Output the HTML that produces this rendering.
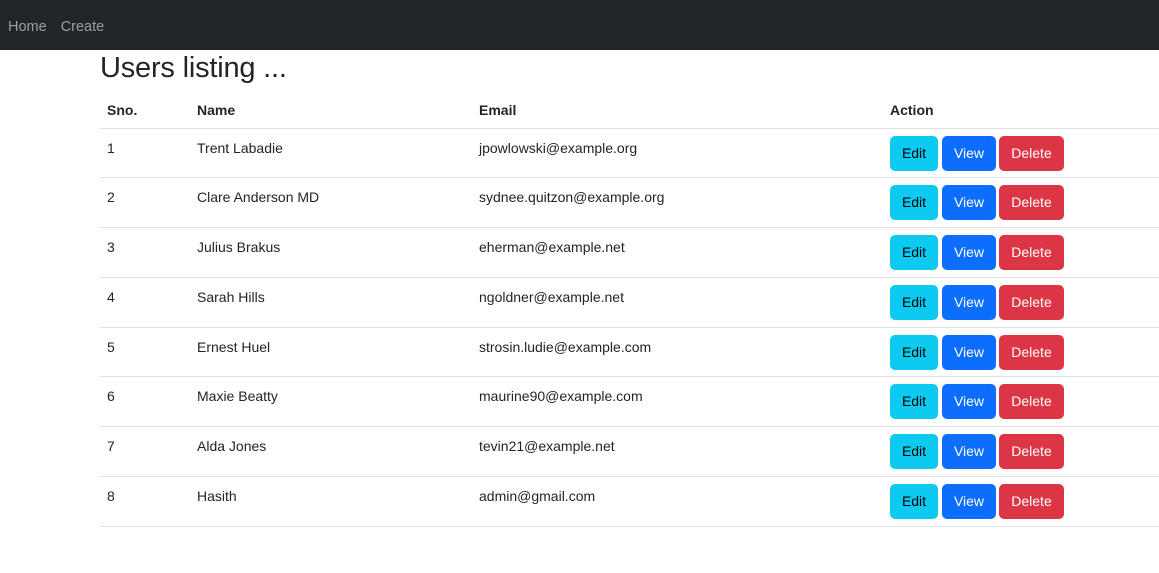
<!DOCTYPE html>
<html><head><style>
*{box-sizing:border-box;margin:0;padding:0}
body{width:1159px;height:573px;background:#fff;font-family:"Liberation Sans",sans-serif;color:#212529;overflow:hidden}
.nav{height:50px;background:#212529;display:flex;align-items:center;padding-left:8px;padding-top:3px;font-size:14.5px}
.nav span{color:rgba(255,255,255,.55);margin-right:14px}
h1{position:absolute;left:100px;top:52px;font-size:29px;font-weight:500;letter-spacing:-.2px}
table{position:absolute;left:100px;top:92px;width:1059px;border-collapse:collapse;font-size:14px}
th{text-align:left;font-weight:bold;height:36px;padding:0 7px;border-bottom:1px solid #dee2e6;vertical-align:middle}
td{height:49.75px;padding:0 7px;border-bottom:1px solid #dee2e6;vertical-align:top;padding-top:11px}
td.a{padding-top:7px;padding-left:0}
.b{display:inline-block;height:35px;line-height:35px;border-radius:5px;font-size:14px;text-align:center;color:#fff;margin-right:1px}
.e{background:#0dcaf0;color:#000;width:48px;margin-right:4px}
.v{background:#0d6efd;width:54px;margin-right:3px}
.d{background:#dc3545;width:65px}
</style></head><body>
<div class="nav"><span>Home</span><span>Create</span></div>
<h1>Users listing ...</h1>
<table>
<tr><th style="width:90px">Sno.</th><th style="width:282px">Name</th><th style="width:418px;padding-left:7px">Email</th><th style="padding-left:0">Action</th></tr>
<tr><td>1</td><td>Trent Labadie</td><td>jpowlowski@example.org</td><td class="a"><span class="b e">Edit</span><span class="b v">View</span><span class="b d">Delete</span></td></tr>
<tr><td>2</td><td>Clare Anderson MD</td><td>sydnee.quitzon@example.org</td><td class="a"><span class="b e">Edit</span><span class="b v">View</span><span class="b d">Delete</span></td></tr>
<tr><td>3</td><td>Julius Brakus</td><td>eherman@example.net</td><td class="a"><span class="b e">Edit</span><span class="b v">View</span><span class="b d">Delete</span></td></tr>
<tr><td>4</td><td>Sarah Hills</td><td>ngoldner@example.net</td><td class="a"><span class="b e">Edit</span><span class="b v">View</span><span class="b d">Delete</span></td></tr>
<tr><td>5</td><td>Ernest Huel</td><td>strosin.ludie@example.com</td><td class="a"><span class="b e">Edit</span><span class="b v">View</span><span class="b d">Delete</span></td></tr>
<tr><td>6</td><td>Maxie Beatty</td><td>maurine90@example.com</td><td class="a"><span class="b e">Edit</span><span class="b v">View</span><span class="b d">Delete</span></td></tr>
<tr><td>7</td><td>Alda Jones</td><td>tevin21@example.net</td><td class="a"><span class="b e">Edit</span><span class="b v">View</span><span class="b d">Delete</span></td></tr>
<tr><td>8</td><td>Hasith</td><td>admin@gmail.com</td><td class="a"><span class="b e">Edit</span><span class="b v">View</span><span class="b d">Delete</span></td></tr>
</table>
</body></html>
